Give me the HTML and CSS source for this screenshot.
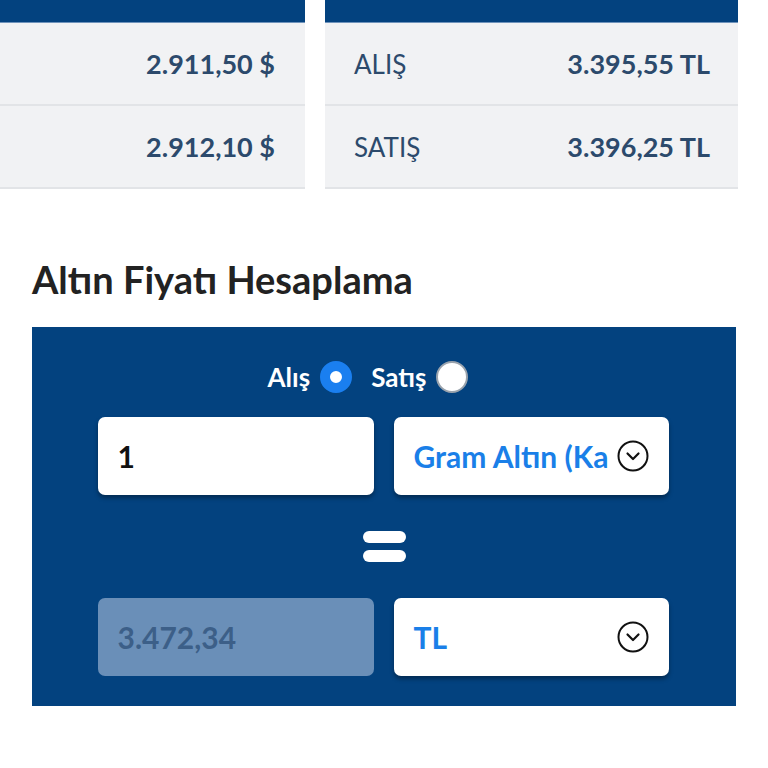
FILE: index.html
```html
<!DOCTYPE html>
<html lang="tr">
<head>
    <meta charset="UTF-8">
    <meta name="viewport" content="width=device-width, initial-scale=1.0">
    <title>Altın Fiyatı Hesaplama</title>
    <link rel="stylesheet" href="styles.css">
</head>
<body>
    <!-- Fiyat kartlari -->
    <div class="price-cards">
        <div class="price-card price-card-left">
            <div class="price-head"></div>
            <div class="price-row">
                <span class="price-label"></span>
                <span class="price-value">2.911,50 $</span>
            </div>
            <div class="price-row">
                <span class="price-label"></span>
                <span class="price-value">2.912,10 $</span>
            </div>
        </div>
        <div class="price-card price-card-right">
            <div class="price-head"></div>
            <div class="price-row">
                <span class="price-label">ALIŞ</span>
                <span class="price-value">3.395,55 TL</span>
            </div>
            <div class="price-row">
                <span class="price-label">SATIŞ</span>
                <span class="price-value">3.396,25 TL</span>
            </div>
        </div>
    </div>

    <h2 class="section-title">Altın Fiyatı Hesaplama</h2>

    <div class="calc">
        <div class="calc-type">
            <label class="radio-item">Alış <input type="radio" name="tip" checked></label>
            <label class="radio-item">Satış <input type="radio" name="tip"></label>
        </div>

        <div class="calc-row">
            <input class="calc-input" type="text" value="1">
            <div class="calc-select">
                <span class="select-text">Gram Altın (Ka</span>
                <svg class="chevron" viewBox="0 0 32 32" width="32" height="32">
                    <circle cx="16" cy="16" r="14.5" fill="none" stroke="#111" stroke-width="2"/>
                    <path d="M10.5 13.5 L16 19 L21.5 13.5" fill="none" stroke="#111" stroke-width="2.2" stroke-linecap="round" stroke-linejoin="round"/>
                </svg>
            </div>
        </div>

        <div class="equals">
            <span class="equals-bar"></span>
            <span class="equals-bar"></span>
        </div>

        <div class="calc-row">
            <input class="calc-input calc-result" type="text" value="3.472,34" disabled>
            <div class="calc-select">
                <span class="select-text">TL</span>
                <svg class="chevron" viewBox="0 0 32 32" width="32" height="32">
                    <circle cx="16" cy="16" r="14.5" fill="none" stroke="#111" stroke-width="2"/>
                    <path d="M10.5 13.5 L16 19 L21.5 13.5" fill="none" stroke="#111" stroke-width="2.2" stroke-linecap="round" stroke-linejoin="round"/>
                </svg>
            </div>
        </div>
    </div>
</body>
</html>
```

FILE: styles.css
```css
body {
    margin: 0;
    padding: 0;
    font-family: 'Lato', 'Open Sans', sans-serif;
    background: #ffffff;
    color: #222222;
    overflow: hidden;
}
.price-cards {
    display: flex;
    gap: 20px;
}
.price-card {
    background: #f1f2f4;
    border-bottom: 2px solid #e2e4e7;
}
.price-card-left {
    width: 305px;
}
.price-card-right {
    width: 413px;
}
.price-head {
    height: 22px;
    background: #03427f;
    border-bottom: 1px solid #6f93bb;
}
.price-row {
    display: flex;
    justify-content: space-between;
    align-items: center;
    height: 81px;
    padding: 0 28px 0 29px;
    color: #2c4a6c;
}
.price-card-left .price-row {
    padding-right: 30px;
}
.price-row + .price-row {
    border-top: 2px solid #e2e4e7;
}
.price-label {
    font-size: 26px;
    font-weight: 400;
}
.price-value {
    font-size: 27px;
    font-weight: 700;
}
.section-title {
    margin: 68px 0 0 32px;
    font-size: 38px;
    font-weight: 700;
    color: #222222;
    line-height: 44px;
}
.calc {
    margin: 26px 0 0 32px;
    width: 704px;
    background: #03427f;
    padding: 33px 0 30px;
}
.calc-type {
    display: flex;
    justify-content: center;
    align-items: center;
    gap: 19px;
    height: 34px;
    margin-bottom: 23px;
    padding-right: 32px;
}
.radio-item {
    display: flex;
    align-items: center;
    gap: 10px;
    color: #ffffff;
    font-size: 26px;
    font-weight: 700;
}
.radio-item input {
    appearance: none;
    -webkit-appearance: none;
    margin: 0;
    width: 32px;
    height: 32px;
    border-radius: 50%;
    background: #ffffff;
    border: 2px solid #9aa3ad;
    box-sizing: border-box;
}
.radio-item input:checked {
    background: #ffffff;
    border: 10px solid #1a7ff0;
}
.calc-row {
    display: grid;
    grid-template-columns: 276px 275px;
    gap: 20px;
    justify-content: center;
    padding-right: 2px;
}
.calc-input,
.calc-select {
    height: 78px;
    box-sizing: border-box;
    border: none;
    border-radius: 7px;
    background: #ffffff;
    box-shadow: 0 3px 4px rgba(0, 0, 0, 0.35);
    font-family: inherit;
    font-size: 30px;
    font-weight: 700;
}
.calc-input {
    width: 100%;
    padding: 0 20px;
    color: #111111;
    outline: none;
}
.calc-result {
    background: #6a8fb8;
    color: #3c5f88;
    box-shadow: none;
    -webkit-text-fill-color: #3c5f88;
    opacity: 1;
}
.calc-select {
    display: flex;
    align-items: center;
    justify-content: space-between;
    padding: 0 20px 0 20px;
    color: #1a7fe8;
    overflow: hidden;
}
.select-text {
    white-space: nowrap;
}
.chevron {
    flex-shrink: 0;
    width: 32px;
    height: 32px;
}
.equals {
    display: flex;
    flex-direction: column;
    align-items: center;
    gap: 7px;
    padding: 36px 0 36px;
}
.equals-bar {
    width: 43px;
    height: 12px;
    border-radius: 6px;
    background: #ffffff;
}
```
